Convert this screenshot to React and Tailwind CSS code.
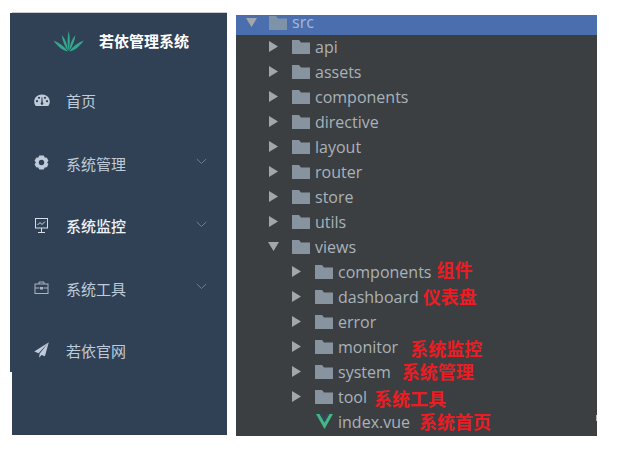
import React from "react";

const cjk = { fontFamily: '"Noto Sans CJK SC", "Noto Sans", sans-serif' };
const mono = { fontFamily: '"Open Sans", sans-serif' };

const GaugeIcon = () => (
  <svg width="16" height="13" viewBox="0 0 16 13">
    <path fill="#bfcbd9" fillRule="evenodd" d="M8 .5C3.6.5.2 3.6.2 7.6c0 1.7.6 3.2 1.6 4.4h12.4c1-1.2 1.6-2.7 1.6-4.4C15.800 3.600 12.400.5 8 .5zM3 8.300a1.100 1.100 0 1 1 0-2.200 1.100 1.100 0 0 1 0 2.200zm2-3.400a1.100 1.100 0 1 1 0-2.200 1.100 1.100 0 0 1 0 2.200zM8 10.900a1.400 1.400 0 0 1-.7-2.600l.3-5h.8l.3 5A1.400 1.400 0 0 1 8 10.900zm3-6a1.100 1.100 0 1 1 0-2.200 1.100 1.100 0 0 1 0 2.200zm2 3.400a1.100 1.100 0 1 1 0-2.200 1.100 1.100 0 0 1 0 2.200z" />
  </svg>
);

const GearIcon = () => (
  <svg width="15" height="15" viewBox="0 0 15 15">
    <path fill="#bfcbd9" fillRule="evenodd" d="M5.300.6h4.400l1 2 2.200.2 1.500 3-1.300 1.700 1.300 1.800-1.500 3-2.200.1-1 2H5.300l-1-2-2.200-.1-1.500-3 1.300-1.800L.6 5.800l1.500-3 2.200-.2zM7.500 4.800a2.700 2.700 0 1 0 0 5.400 2.700 2.700 0 0 0 0-5.400z" />
  </svg>
);

const MonitorIcon = () => (
  <svg width="15" height="15" viewBox="0 0 15 15" fill="none" stroke="#d5dde6" strokeWidth="1">
    <rect x="1.500" y="0.500" width="12" height="9.500" />
    <path d="M3.500 7l2.500-2.500 2 2 3-3M7.500 10v4M4 14.500h7" />
  </svg>
);

const CaseIcon = () => (
  <svg width="15" height="13" viewBox="0 0 15 13" fill="none" stroke="#a7b4c2" strokeWidth="1">
    <rect x="1" y="3" width="13" height="9.500" />
    <path d="M5 3V1h5v2M1 7h4.500M9.500 7H14" />
    <rect x="6" y="6" width="3" height="2.500" fill="#a7b4c2" stroke="none" />
  </svg>
);

const PlaneIcon = () => (
  <svg width="15" height="16" viewBox="0 0 15 16">
    <path fill="#bfcbd9" d="M14.800.3L.3 9.600l4.300 1.700zM14.800.3L5.600 11.800l-.5 3.900 2.400-2.800 3.400 1.400z" />
  </svg>
);

const Chevron = () => (
  <svg width="11" height="7" viewBox="0 0 11 7" fill="none" stroke="#6d7f91" strokeWidth="1">
    <path d="M.8 1l4.700 4.500L10.200 1" />
  </svg>
);

const Logo = () => (
  <svg width="32" height="21" viewBox="0 0 32 21">
    <g fill="#33a88e">
      <path d="M15.600 20C14 13 14.400 6 15.600 0c1.600 6 1.600 13 0 20z" />
      <path d="M15.200 20C12 16 9.400 10 8.800 4c3.400 4 5.800 10 6.400 16z" />
      <path d="M16 20c.6-6 3-12 6.400-16-.6 6-3.200 12-6.400 16z" />
      <path d="M15 20.500C9.500 19.500 4.500 15.500.5 9.500c6 2.500 11 6 14.500 11z" />
      <path d="M16.200 20.500c5.500-1 10.500-5 14.500-11-6 2.500-11 6-14.500 11z" />
    </g>
  </svg>
);

const menu = [
  { label: "首页", icon: <GaugeIcon /> },
  { label: "系统管理", icon: <GearIcon />, arrow: true },
  { label: "系统监控", icon: <MonitorIcon />, arrow: true, active: true },
  { label: "系统工具", icon: <CaseIcon />, arrow: true },
  { label: "若依官网", icon: <PlaneIcon /> },
];

const Sidebar = () => (
  <div className="w-[217px] shrink-0 flex" style={cjk}>
    <div className="w-[2px] h-[359px] mt-px bg-[#304156]" />
    <div className="w-[215px] h-[423px] bg-[#304156] border-t border-[#c9ccd0] flex flex-col">
      <div className="h-[57px] shrink-0 flex items-center pl-[41px]">
        <Logo />
        <span className="ml-[14px] text-[15px] font-bold text-white">若依管理系统</span>
      </div>
      <div className="flex flex-col">
        {menu.map((m) => (
          <div key={m.label} className="h-[62.5px] flex items-center pl-[22px] pr-[20px]">
            <span className="w-[32px] mb-[2px] flex">{m.icon}</span>
            <span className={m.active ? "text-[15px] text-[#eef2f6] font-medium" : "text-[15px] text-[#bfcbd9]"}>{m.label}</span>
            {m.arrow && <span className="ml-auto mb-1 flex"><Chevron /></span>}
          </div>
        ))}
      </div>
    </div>
  </div>
);

const Folder = ({ dim }) => (
  <svg width="18" height="15" viewBox="0 0 18 15" className="shrink-0">
    <path fill={dim ? "#7f93a8" : "#87939e"} d="M0 1h7l2 2.500h9V15H0z" />
  </svg>
);

const VueIcon = () => (
  <svg width="17" height="15" viewBox="0 0 17 15" className="shrink-0 ml-px">
    <path fill="#41b883" d="M0 0h3.600l4.900 8.600L13.400 0H17L8.500 15z" />
    <path fill="#35495e" d="M3.600 0h2.500l2.400 4.300L10.900 0h2.500L8.500 8.600z" />
  </svg>
);

const Arrow = ({ open }) => (
  <svg width="11" height="11" viewBox="0 0 11 11" className="shrink-0">
    {open ? <path fill="#a3a7aa" d="M0 1h11L5.500 10z" /> : <path fill="#a3a7aa" d="M1 0l9 5.500L1 11z" />}
  </svg>
);

const rows = [
  { name: "api", depth: 1 },
  { name: "assets", depth: 1 },
  { name: "components", depth: 1 },
  { name: "directive", depth: 1 },
  { name: "layout", depth: 1 },
  { name: "router", depth: 1 },
  { name: "store", depth: 1 },
  { name: "utils", depth: 1 },
  { name: "views", depth: 1, open: true },
  { name: "components", depth: 2, note: "组件", noteCls: "ml-[5px] mb-[6px]" },
  { name: "dashboard", depth: 2, note: "仪表盘", noteCls: "ml-[4px] mb-[2px]" },
  { name: "error", depth: 2 },
  { name: "monitor", depth: 2, note: "系统监控", noteCls: "ml-[12px] mt-[2px]" },
  { name: "system", depth: 2, note: "系统管理", noteCls: "ml-[11px] mb-[2px]" },
  { name: "tool", depth: 2, note: "系统工具", noteCls: "ml-[7px] mt-[2px]" },
  { name: "index.vue", depth: 2, vue: true, note: "系统首页", noteCls: "ml-[9px] mb-[2px]" },
];

const Row = ({ row }) => (
  <div className={row.depth === 2 ? "h-[25px] flex items-center pb-[2px] pl-[55px]" : "h-[25px] flex items-center pb-[2px] pl-[32px]"}>
    <span className="w-[24px] flex">{!row.vue && <Arrow open={row.open} />}</span>
    {row.vue ? <VueIcon /> : <Folder />}
    <span className="ml-[5px] text-[16px] leading-[20px] text-[#a9b2ba]" style={mono}>{row.name}</span>
    {row.note && <span className={"text-[18px] leading-none font-bold text-[#ec1c24] " + row.noteCls} style={cjk}>{row.note}</span>}
  </div>
);

const Tree = () => (
  <div className="relative mt-[3px] ml-[9px] w-[361px] h-[421px] bg-[#3c3f41]">
    <div className="h-[20px] bg-[#4b6eaf] flex items-center pl-[10px] pb-[5px]">
      <span className="w-[23px] flex"><Arrow open /></span>
      <Folder dim />
      <span className="ml-[5px] text-[16px] leading-[15px] text-[#a9bad0]" style={mono}>src</span>
    </div>
    {rows.map((r) => <Row key={r.name + r.depth} row={r} />)}
    <div className="absolute right-0 top-[400px] w-px h-[6px] bg-[#b5b7b9]" />
  </div>
);

export default function App() {
  return (
    <div className="w-[623px] h-[455px] bg-white flex items-start pt-[12px] pl-[10px] overflow-hidden">
      <Sidebar />
      <Tree />
    </div>
  );
}
